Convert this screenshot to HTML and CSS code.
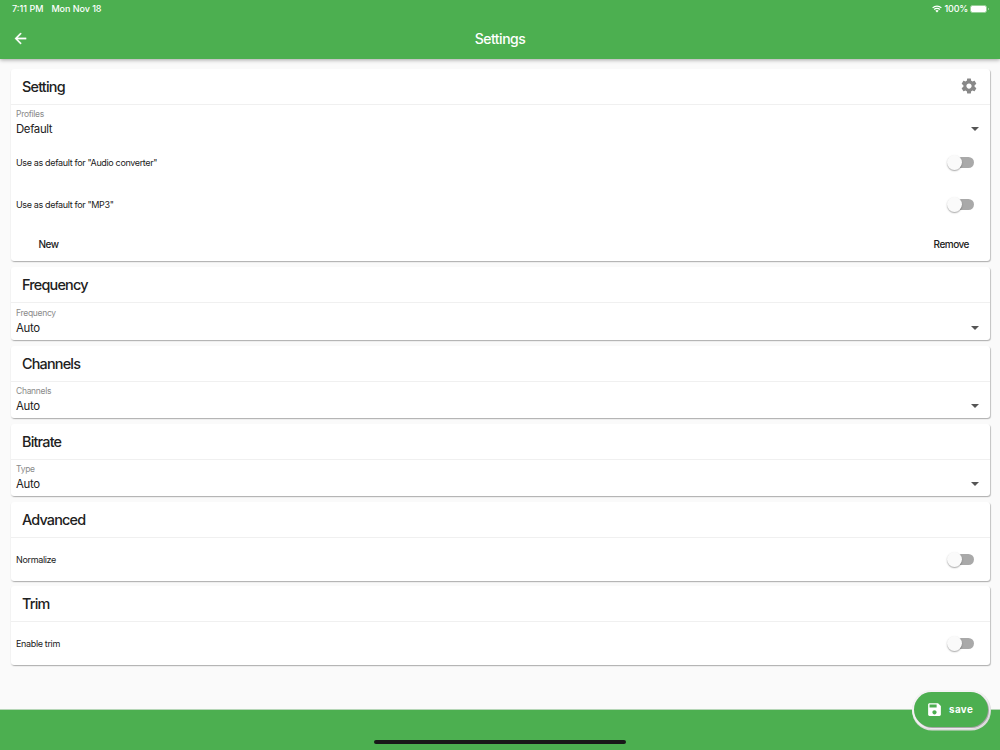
FILE: index.html
```
<!DOCTYPE html>
<html lang="en">
<head>
<meta charset="UTF-8">
<meta name="viewport" content="width=device-width, initial-scale=1.0">
<title>Settings</title>
<link rel="stylesheet" href="styles.css">
</head>
<body>
<header class="app-bar">
    <div class="status-bar">
        <span class="time">7:11 PM</span>
        <span class="date">Mon Nov 18</span>
        <svg class="wifi" viewBox="0 0 20 15">
            <path d="M1.2 5.2a12.5 12.5 0 0 1 17.6 0M4.3 8.5a8 8 0 0 1 11.4 0" fill="none" stroke="#fff" stroke-width="2.4"/>
            <path d="M10 14.5l-3.4-3.4a4.8 4.8 0 0 1 6.8 0z" fill="#fff"/>
        </svg>
        <span class="percent">100%</span>
        <span class="battery"></span>
    </div>
    <div class="title-bar">
        <svg class="back" viewBox="0 0 24 24"><path d="M20 11H7.83l5.59-5.59L12 4l-8 8 8 8 1.41-1.41L7.83 13H20z"/></svg>
        <h1>Settings</h1>
    </div>
</header>

<main>
    <section class="card">
        <div class="card-header">
            <h2>Setting</h2>
            <svg class="gear" viewBox="0 0 24 24"><path d="M19.43 12.98c.04-.32.07-.64.07-.98s-.03-.66-.07-.98l2.11-1.65c.19-.15.24-.42.12-.64l-2-3.46c-.12-.22-.39-.3-.61-.22l-2.49 1c-.52-.4-1.08-.73-1.69-.98l-.38-2.65C14.46 2.18 14.25 2 14 2h-4c-.25 0-.46.18-.49.42l-.38 2.65c-.61.25-1.17.59-1.69.98l-2.49-1c-.23-.09-.49 0-.61.22l-2 3.46c-.13.22-.07.49.12.64l2.11 1.65c-.04.32-.07.65-.07.98s.03.66.07.98l-2.11 1.65c-.19.15-.24.42-.12.64l2 3.46c.12.22.39.3.61.22l2.49-1c.52.4 1.08.73 1.69.98l.38 2.65c.03.24.24.42.49.42h4c.25 0 .46-.18.49-.42l.38-2.65c.61-.25 1.17-.59 1.69-.98l2.49 1c.23.09.49 0 .61-.22l2-3.46c.12-.22.07-.49-.12-.64l-2.11-1.65zM12 15.5c-1.93 0-3.5-1.57-3.5-3.5s1.57-3.5 3.5-3.5 3.5 1.57 3.5 3.5-1.57 3.5-3.5 3.5z"/></svg>
        </div>
        <div class="select">
            <label>Profiles</label>
            <div class="value"><span>Default</span><i class="caret"></i></div>
        </div>
        <div class="switch-row"><span>Use as default for "Audio converter"</span><i class="switch"></i></div>
        <div class="switch-row"><span>Use as default for "MP3"</span><i class="switch"></i></div>
        <div class="actions">
            <span>New</span>
            <span>Remove</span>
        </div>
    </section>

    <section class="card">
        <div class="card-header"><h2>Frequency</h2></div>
        <div class="select">
            <label>Frequency</label>
            <div class="value"><span>Auto</span><i class="caret"></i></div>
        </div>
    </section>

    <section class="card">
        <div class="card-header"><h2>Channels</h2></div>
        <div class="select">
            <label>Channels</label>
            <div class="value"><span>Auto</span><i class="caret"></i></div>
        </div>
    </section>

    <section class="card">
        <div class="card-header"><h2>Bitrate</h2></div>
        <div class="select">
            <label>Type</label>
            <div class="value"><span>Auto</span><i class="caret"></i></div>
        </div>
    </section>

    <section class="card">
        <div class="card-header"><h2>Advanced</h2></div>
        <div class="switch-row"><span>Normalize</span><i class="switch"></i></div>
    </section>

    <section class="card">
        <div class="card-header"><h2>Trim</h2></div>
        <div class="switch-row"><span>Enable trim</span><i class="switch"></i></div>
    </section>
</main>

<footer class="bottom-bar">
    <div class="home-indicator"></div>
</footer>
<!-- floating save button -->
<div class="save">
    <svg viewBox="0 0 24 24"><path d="M17 3H5c-1.11 0-2 .9-2 2v14c0 1.1.89 2 2 2h14c1.1 0 2-.9 2-2V7l-4-4zm-5 16c-1.66 0-3-1.34-3-3s1.34-3 3-3 3 1.34 3 3-1.34 3-3 3zm3-10H5V5h10v4z"/></svg>
    <span>save</span>
</div>
</body>
</html>
```
FILE: styles.css
```
* {
    box-sizing: border-box;
}

body {
    margin: 0;
    height: 750px;
    display: flex;
    flex-direction: column;
    overflow: hidden;
    background: #fafafa;
    color: #212121;
    font-family: Inter, Roboto, sans-serif;
}

h1, h2 {
    margin: 0;
    font-weight: 500;
}

.app-bar {
    height: 59px;
    flex: none;
    background: #4caf50;
    color: #fff;
    box-shadow: 0 1px 4px rgba(0, 0, 0, 0.35);
}

.status-bar {
    display: flex;
    align-items: center;
    height: 18px;
    padding: 0 12px;
    font-size: 9px;
    font-weight: 500;
}

.time, .date, .percent {
    padding-bottom: 1px;
}

.date {
    margin-left: 8px;
    letter-spacing: -0.05px;
}

.wifi {
    width: 10px;
    height: 8px;
    margin-left: auto;
    margin-right: 3px;
}

.percent {
    letter-spacing: -0.2px;
}

.battery {
    position: relative;
    width: 17px;
    height: 8px;
    margin-left: 2px;
    margin-right: 1px;
    border: 1px solid #94cf96;
    border-radius: 2.5px;
    background: #fff;
}

.battery::after {
    content: "";
    position: absolute;
    right: -3px;
    top: 2px;
    width: 1px;
    height: 2px;
    background: #94cf96;
}

.title-bar {
    display: flex;
    align-items: center;
    height: 40px;
    padding: 0 12px;
}

.back {
    width: 17px;
    height: 17px;
    fill: #fff;
    stroke: #fff;
    stroke-width: 0.4;
}

h1 {
    flex: 1;
    margin-right: 17px;
    text-align: center;
    font-size: 14px;
    letter-spacing: -0.5px;
}

main {
    display: flex;
    flex-direction: column;
    flex: 1;
    gap: 5.8px;
    padding: 9.8px 10.5px 0 11px;
}

.card {
    border-radius: 3px;
    background: #fff;
    box-shadow: 1px 1px 1px rgba(0, 0, 0, 0.2), 0 1px 1.5px rgba(0, 0, 0, 0.14);
}

.card-header {
    display: flex;
    align-items: center;
    justify-content: space-between;
    height: 36px;
    padding: 0 12px 0 11px;
    border-bottom: 1px solid #f0f0f0;
}

h2 {
    font-size: 14.4px;
    font-weight: 450;
    letter-spacing: -0.8px;
}

h2:first-child {
    word-spacing: 0;
}

.gear {
    width: 18px;
    height: 18px;
    fill: #888;
}

.select {
    height: 36.5px;
    padding: 3.6px 11px 0 5px;
}

.select label {
    display: block;
    color: #8a8a8a;
    font-size: 8.5px;
    line-height: 12px;
    letter-spacing: -0.3px;
}

.value {
    display: flex;
    align-items: center;
    justify-content: space-between;
    height: 18px;
    font-size: 11.4px;
    letter-spacing: -0.35px;
}

.caret {
    border: 4px solid transparent;
    border-top-color: #555;
    border-bottom: 0;
}

.switch-row {
    display: flex;
    align-items: center;
    justify-content: space-between;
    height: 42.4px;
    padding: 0 15.5px 0 5px;
    font-size: 9px;
    letter-spacing: -0.35px;
}

.switch {
    display: flex;
    align-items: center;
    width: 22px;
    height: 11px;
    border-radius: 6px;
    background: #a9a9a9;
}

.switch::before {
    content: "";
    flex: none;
    width: 15px;
    height: 15px;
    margin-left: -5px;
    border-radius: 50%;
    background: #fafafa;
    box-shadow: 0 1px 1.5px rgba(0, 0, 0, 0.35);
}

.actions {
    display: flex;
    align-items: center;
    justify-content: space-between;
    height: 35.4px;
    padding: 0 20.5px 0 27.5px;
    font-size: 10px;
    font-weight: 500;
    letter-spacing: -0.5px;
}

.bottom-bar {
    display: flex;
    align-items: flex-end;
    justify-content: center;
    height: 41px;
    flex: none;
    border-top: 1px solid #b5d6b6;
    background: #4caf50;
}

.home-indicator {
    width: 252px;
    height: 4px;
    margin-bottom: 6px;
    border-radius: 2px;
    background: #181818;
}

.save {
    position: absolute;
    right: 12px;
    bottom: 23px;
    display: flex;
    align-items: center;
    width: 74px;
    height: 35px;
    padding-left: 12px;
    border-radius: 18px;
    background: #4caf50;
    color: #fff;
    font-size: 9.8px;
    font-weight: 700;
    letter-spacing: 0.4px;
    box-shadow: 1px 1px 1px rgba(0, 0, 0, 0.35), 0 0 0 2px #f4f3f4, 0.5px 1px 0 2.5px #dcdadc;
}

.save svg {
    width: 17px;
    height: 17px;
    margin-right: 6px;
    fill: #fff;
}
```
